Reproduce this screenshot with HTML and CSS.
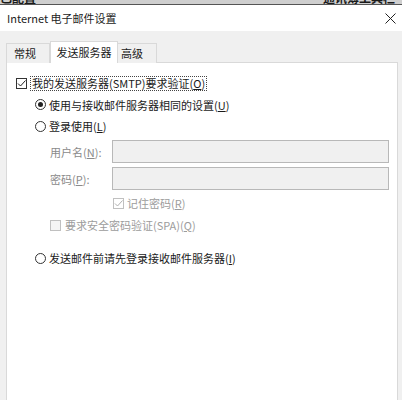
FILE: index.html
```html
<!DOCTYPE html>
<html lang="zh-CN">
<head>
    <meta charset="UTF-8">
    <meta name="viewport" content="width=device-width, initial-scale=1.0">
    <title>Internet 电子邮件设置</title>
    <link rel="stylesheet" href="styles.css">
</head>
<body>
    <div class="backstrip">
        <span class="back-left">已配置</span>
        <span class="back-right">通讯簿工具栏</span>
    </div>
    <div class="titlebar">
        <span class="title">Internet 电子邮件设置</span>
        <svg class="close" width="11" height="11" viewBox="0 0 11 11">
            <path d="M0.5 0.5 L10.5 10.5 M10.5 0.5 L0.5 10.5" stroke="#222" stroke-width="1" fill="none"/>
        </svg>
    </div>
    <div class="dialog">
        <div class="tabs">
            <div class="tab tab-general">常规</div>
            <div class="tab tab-active">发送服务器</div>
            <div class="tab tab-adv">高级</div>
        </div>
        <div class="panel">
            <div class="row row-auth">
                <span class="box">
                    <svg width="11" height="11" viewBox="0 0 11 11"><path d="M2 5.5 L4.5 8 L9.5 2.5" stroke="#222" stroke-width="1" fill="none"/></svg>
                </span>
                <span class="focus">我的发送服务器(SMTP)要求验证(<u>O</u>)</span>
            </div>
            <div class="row row-radio">
                <span class="radio checked"></span>
                <span>使用与接收邮件服务器相同的设置(<u>U</u>)</span>
            </div>
            <div class="row row-radio row-login">
                <span class="radio"></span>
                <span>登录使用(<u>L</u>)</span>
            </div>
            <div class="fields">
                <label class="field-label">用户名(<u>N</u>):</label>
                <div class="field-input"></div>
                <label class="field-label">密码(<u>P</u>):</label>
                <div class="field-input"></div>
            </div>
            <div class="row row-remember disabled">
                <span class="box box-disabled">
                    <svg width="11" height="11" viewBox="0 0 11 11"><path d="M2 5.5 L4.5 8 L9.5 2.5" stroke="#b0b0b0" stroke-width="1" fill="none"/></svg>
                </span>
                <span>记住密码(<u>R</u>)</span>
            </div>
            <div class="row row-spa disabled">
                <span class="box box-disabled box-empty"></span>
                <span>要求安全密码验证(SPA)(<u>Q</u>)</span>
            </div>
            <div class="row row-radio row-before">
                <span class="radio"></span>
                <span>发送邮件前请先登录接收邮件服务器(<u>I</u>)</span>
            </div>
        </div>
    </div>
</body>
</html>
```

FILE: styles.css
```css
body {
    margin: 0;
    width: 402px;
    height: 400px;
    overflow: hidden;
    background-color: #f0f0f0;
    font-family: "Noto Sans CJK SC", "Noto Sans", sans-serif;
    font-size: 11px;
    color: #1a1a1a;
}
.backstrip {
    display: flex;
    justify-content: space-between;
    height: 4px;
    overflow: hidden;
    background-color: #cfcfcf;
    border-bottom: 1px solid #555;
    font-size: 12px;
    font-weight: bold;
    line-height: 12px;
}
.back-left {
    margin-top: -8px;
}
.back-right {
    margin-top: -8px;
    padding-right: 7px;
}
.titlebar {
    display: flex;
    justify-content: space-between;
    align-items: center;
    height: 26px;
    padding: 0 6px 0 7px;
    background-color: #fff;
}
.title {
    font-size: 11px;
    color: #222;
}
.dialog {
    padding: 10px 4px 0 6px;
}
.tabs {
    display: flex;
    align-items: flex-end;
    height: 22px;
}
.tab {
    box-sizing: border-box;
    height: 20px;
    line-height: 18px;
    border: 1px solid #d9d9d9;
    border-bottom: none;
    background-color: #f0f0f0;
    text-align: center;
}
.tab-general {
    width: 44px;
    padding-right: 6px;
}
.tab-active {
    position: relative;
    z-index: 1;
    width: 68px;
    height: 22px;
    line-height: 20px;
    background-color: #fff;
}
.tab-adv {
    width: 39px;
    border-left: none;
    padding-right: 10px;
}
.panel {
    box-sizing: border-box;
    height: 338px;
    margin-top: -1px;
    padding: 10px 0 0 9px;
    background-color: #fff;
    border: 1px solid #d9d9d9;
    border-bottom: none;
}
.row {
    display: flex;
    align-items: center;
    height: 21px;
}
.row-radio {
    padding-left: 19px;
    gap: 3px;
}
.row-login {
    height: 22px;
}
.box {
    box-sizing: border-box;
    display: flex;
    width: 11px;
    height: 11px;
    border: 1px solid #333;
    background-color: #fff;
}
.box svg {
    margin: -1px;
}
.box-disabled {
    border-color: #c0c0c0;
}
.box-empty {
    background-color: #f4f4f4;
}
.focus {
    margin-left: 3px;
    padding: 0 1px;
    line-height: 13px;
    border: 1px dotted #444;
}
.radio {
    box-sizing: border-box;
    display: flex;
    align-items: center;
    justify-content: center;
    width: 11px;
    height: 11px;
    border: 1px solid #333;
    border-radius: 50%;
    background-color: #fff;
}
.radio.checked::after {
    content: "";
    width: 5px;
    height: 5px;
    border-radius: 50%;
    background-color: #222;
}
.fields {
    display: grid;
    grid-template-columns: 62px 277px;
    grid-auto-rows: 23px;
    row-gap: 4px;
    align-items: center;
    margin-top: 3px;
    padding-left: 34px;
}
.field-label {
    color: #8a8a8a;
}
.field-input {
    box-sizing: border-box;
    height: 23px;
    background-color: #f0f0f0;
    border: 1px solid #b8b8b8;
}
.disabled {
    color: #9c9c9c;
}
.row-remember {
    height: 22px;
    margin-top: 2px;
    padding-left: 97px;
    gap: 3px;
}
.row-spa {
    height: 22px;
    padding-left: 34px;
    gap: 4px;
}
.row-before {
    height: 22px;
    margin-top: 11px;
}
```
